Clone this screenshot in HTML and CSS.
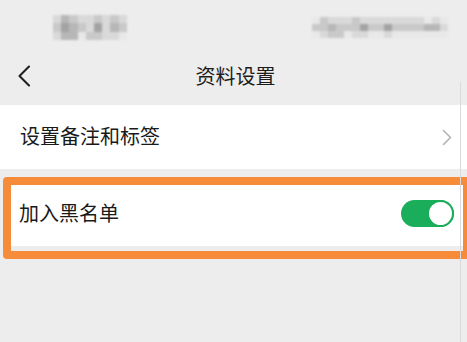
FILE: index.html
```html
<!DOCTYPE html>
<html lang="zh-CN">
<head>
<meta charset="utf-8">
<title>资料设置</title>
<link rel="stylesheet" href="styles.css">
</head>
<body>
<div class="screen">
  <div class="status">
    <div class="mosaic mosaic-left">
      <i class="c1"></i><i class="c3"></i><i class="c2"></i><i class="c1"></i><i class="c1"></i><i class="c2"></i><i class="c1"></i><i class="c2"></i><i class="c1"></i>
      <i class="c2"></i><i class="c4"></i><i class="c3"></i><i class="c2"></i><i class="c1"></i><i class="c4"></i><i class="c1"></i><i class="c3"></i><i class="c2"></i>
      <i class="c1"></i><i class="c3"></i><i class="c3"></i><i class="c0"></i><i class="c2"></i><i class="c2"></i><i class="c1"></i><i class="c1"></i><i class="c0"></i>
    </div>
    <div class="mosaic mosaic-right">
      <i class="c0"></i><i class="c2"></i><i class="c1"></i><i class="c1"></i><i class="c1"></i><i class="c2"></i><i class="c1"></i><i class="c1"></i><i class="c1"></i><i class="c1"></i><i class="c1"></i><i class="c1"></i><i class="c1"></i><i class="c1"></i><i class="c0"></i><i class="c1"></i><i class="c0"></i>
      <i class="c2"></i><i class="c2"></i><i class="c3"></i><i class="c2"></i><i class="c2"></i><i class="c2"></i><i class="c4"></i><i class="c2"></i><i class="c2"></i><i class="c4"></i><i class="c2"></i><i class="c2"></i><i class="c2"></i><i class="c2"></i><i class="c3"></i><i class="c3"></i><i class="c1"></i>
      <i class="c0"></i><i class="c1"></i><i class="c2"></i><i class="c2"></i><i class="c0"></i><i class="c1"></i><i class="c1"></i><i class="c0"></i><i class="c0"></i><i class="c1"></i><i class="c0"></i><i class="c0"></i><i class="c0"></i><i class="c0"></i><i class="c0"></i><i class="c0"></i><i class="c0"></i>
    </div>
  </div>

  <div class="navbar">
    <svg class="back" width="14" height="22" viewBox="0 0 14 22" aria-hidden="true">
      <path d="M12 1.5 L2.5 11 L12 20.5" fill="none" stroke="#1f1f1f" stroke-width="2.1" stroke-linecap="round" stroke-linejoin="round"/>
    </svg>
    <div class="title">资料设置</div>
  </div>

  <div class="row row-link">
    <span class="label">设置备注和标签</span>
    <svg class="arrow" width="11" height="17" viewBox="0 0 11 17" aria-hidden="true">
      <path d="M1.5 1.5 L8.5 8.5 L1.5 15.5" fill="none" stroke="#b4b4b4" stroke-width="1.6" stroke-linecap="round" stroke-linejoin="round"/>
    </svg>
  </div>

  <div class="highlight">
    <div class="row row-switch">
      <span class="label">加入黑名单</span>
      <div class="switch"><div class="knob"></div></div>
    </div>
  </div>

  <div class="edge-line"></div>
</div>
</body>
</html>
```

FILE: styles.css
```css
html, body {
  margin: 0;
  padding: 0;
}
body {
  background: #ededed;
  font-family: "Noto Sans CJK SC", "Noto Sans", sans-serif;
  color: #1a1a1a;
}
.screen {
  position: relative;
  width: 467px;
  height: 342px;
  overflow: hidden;
  background: #ededed;
}

/* status bar with pixelated blobs */
.status {
  height: 52px;
  display: flex;
  align-items: flex-start;
  justify-content: space-between;
  padding: 15px 19px 0 53px;
  box-sizing: border-box;
}
.mosaic {
  display: grid;
  grid-auto-rows: 8.3px;
  filter: blur(1.2px);
}
.mosaic-left {
  grid-template-columns: repeat(9, 8.2px);
}
.mosaic-right {
  margin-top: 2px;
  grid-template-rows: repeat(3, 7px);
  grid-template-columns: repeat(17, 8px);
}
.mosaic i { display: block; }
.c0 { background: #e8e8e8; }
.c1 { background: #d9d9d9; }
.c2 { background: #c9c9c9; }
.c3 { background: #b7b7b7; }
.c4 { background: #a3a3a3; }

/* nav bar */
.navbar {
  position: relative;
  height: 53px;
  display: flex;
  align-items: center;
  justify-content: center;
}
.back {
  position: absolute;
  left: 17px;
  top: 13px;
}
.title {
  font-size: 20px;
  line-height: 24px;
  margin-top: -5px;
  margin-left: 4px;
  color: #1c1c1c;
}

/* rows */
.row {
  background: #ffffff;
  display: flex;
  align-items: center;
  justify-content: space-between;
}
.label {
  font-size: 20px;
  line-height: 24px;
  color: #1a1a1a;
}
.row-link {
  height: 64px;
  padding: 0 14px 0 20px;
}
.row-link .label { margin-top: -2px; }

/* orange highlight frame */
.highlight {
  margin: 8px 0 0 3px;
  width: 468px;
  box-sizing: border-box;
  border: 8px solid #f68b3a;
  border-radius: 4px;
  background: #ededed;
  padding-bottom: 5px;
}
.row-switch {
  height: 61px;
  box-sizing: border-box;
  padding: 0 9px 5px 8px;
}

.switch {
  width: 53px;
  height: 27px;
  border-radius: 14px;
  background: #1aad5a;
  display: flex;
  justify-content: flex-end;
  align-items: center;
}
.knob {
  width: 23px;
  height: 23px;
  border-radius: 50%;
  background: #ffffff;
  border: 2px solid #1aad5a;
}

.edge-line {
  position: absolute;
  left: 460px;
  top: 82px;
  width: 1px;
  height: 260px;
  background: #dadada;
}
```
